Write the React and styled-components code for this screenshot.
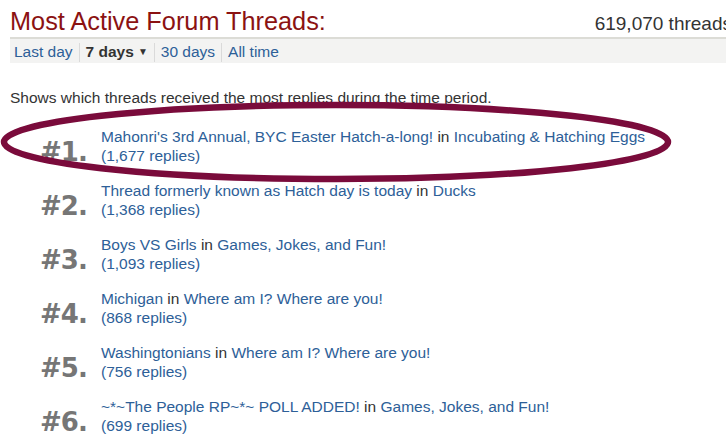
import React from "react";
import styled, { createGlobalStyle } from "styled-components";

const Global = createGlobalStyle`
  html, body { margin: 0; padding: 0; background: #fff; overflow: hidden; }
  body { font-family: "Liberation Sans", Arial, sans-serif; }
`;

const Page = styled.div`
  position: relative;
  width: 722px;
  padding-left: 10px;
  height: 441px;
  color: #333;
`;

const Header = styled.div`
  display: flex;
  justify-content: space-between;
  align-items: baseline;
  padding-top: 6px;
  padding-bottom: 1px;
`;

const Title = styled.h1`
  margin: 0;
  font-size: 25.3px;
  line-height: 30px;
  font-weight: normal;
  color: #8b1212;
`;

const Count = styled.div`
  font-size: 19px;
  color: #333;
  white-space: nowrap;
`;

const Nav = styled.nav`
  display: flex;
  align-items: center;
  height: 26px;
  padding-left: 4px;
  padding-top: 2px;
  box-sizing: border-box;
  border-top: 2px solid #dcdcd6;
  background: #f3f3f2;
  font-size: 15.5px;
`;

const NavLink = styled.a`
  color: ${(p) => (p.$active ? "#333" : "#2d6098")};
  font-weight: ${(p) => (p.$active ? "bold" : "normal")};
  text-decoration: none;
  white-space: nowrap;
`;

const Caret = styled.span`
  font-size: 10px;
  margin-left: 4px;
  vertical-align: 2px;
`;

const Sep = styled.span`
  display: inline-block;
  width: 1px;
  height: 19px;
  background: #dadada;
  margin: 0 6px;
`;

const Intro = styled.p`
  margin: 25px 0 0;
  font-size: 15.5px;
  line-height: 19px;
  color: #333;
`;

const List = styled.ol`
  list-style: none;
  margin: 20px 0 0;
  padding: 0;
`;

const Row = styled.li`
  display: flex;
  align-items: last baseline;
  margin-bottom: 16px;
`;

const Rank = styled.span`
  width: 61px;
  margin-left: 30px;
  font-family: "DejaVu Sans", sans-serif;
  font-weight: bold;
  font-size: 26px;
  letter-spacing: -1px;
  line-height: 26px;
  color: #767676;
`;

const Info = styled.div`
  font-size: 15.5px;
  line-height: 19px;
  color: #333;
`;

const Link = styled.a`
  color: #2d6098;
  text-decoration: none;
`;

const Overlay = styled.svg`
  position: absolute;
  left: 0;
  top: 0;
  pointer-events: none;
`;

const threads = [
  { title: "Mahonri's 3rd Annual, BYC Easter Hatch-a-long!", forum: "Incubating & Hatching Eggs", replies: "1,677" },
  { title: "Thread formerly known as Hatch day is today", forum: "Ducks", replies: "1,368" },
  { title: "Boys VS Girls", forum: "Games, Jokes, and Fun!", replies: "1,093" },
  { title: "Michigan", forum: "Where am I? Where are you!", replies: "868" },
  { title: "Washingtonians", forum: "Where am I? Where are you!", replies: "756" },
  { title: "~*~The People RP~*~ POLL ADDED!", forum: "Games, Jokes, and Fun!", replies: "699" },
];

export default function App() {
  return (
    <>
      <Global />
      <Page>
        <Header>
          <Title>Most Active Forum Threads:</Title>
          <Count>619,070 threads</Count>
        </Header>
        <Nav>
          <NavLink href="#">Last day</NavLink>
          <Sep />
          <NavLink $active>
            7 days<Caret>▼</Caret>
          </NavLink>
          <Sep />
          <NavLink href="#">30 days</NavLink>
          <Sep />
          <NavLink href="#">All time</NavLink>
        </Nav>
        <Intro>Shows which threads received the most replies during the time period.</Intro>
        <List>
          {threads.map((t, i) => (
            <Row key={i}>
              <Rank>#{i + 1}.</Rank>
              <Info>
                <Link href="#">{t.title}</Link> in <Link href="#">{t.forum}</Link>
                <br />
                <Link href="#">({t.replies} replies)</Link>
              </Info>
            </Row>
          ))}
        </List>
        <Overlay width="726" height="441" viewBox="0 0 726 441">
          <ellipse cx="336" cy="142" rx="332" ry="37" fill="none" stroke="#7a0b3b" strokeWidth="6.5" />
        </Overlay>
      </Page>
    </>
  );
}
